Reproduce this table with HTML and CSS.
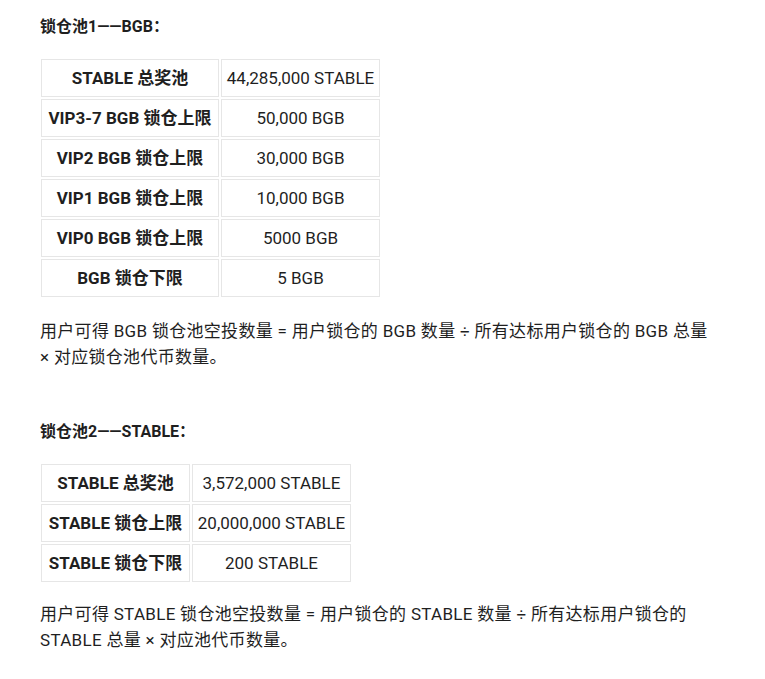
FILE: index.html
```html
<!DOCTYPE html>
<html lang="zh-CN">
<head>
<meta charset="utf-8">
<link rel="stylesheet" href="styles.css">
</head>
<body>
<div class="article">
  <p class="heading">锁仓池1——BGB：</p>
  <table class="pool pool-bgb">
    <tr><th>STABLE 总奖池</th><td>44,285,000 STABLE</td></tr>
    <tr><th>VIP3-7 BGB 锁仓上限</th><td>50,000 BGB</td></tr>
    <tr><th>VIP2 BGB 锁仓上限</th><td>30,000 BGB</td></tr>
    <tr><th>VIP1 BGB 锁仓上限</th><td>10,000 BGB</td></tr>
    <tr><th>VIP0 BGB 锁仓上限</th><td>5000 BGB</td></tr>
    <tr><th>BGB 锁仓下限</th><td>5 BGB</td></tr>
  </table>
  <p class="text">用户可得 BGB 锁仓池空投数量 = 用户锁仓的 BGB 数量 ÷ 所有达标用户锁仓的 BGB 总量 × 对应锁仓池代币数量。</p>
  <p class="heading heading-second">锁仓池2——STABLE：</p>
  <table class="pool pool-stable">
    <tr><th>STABLE 总奖池</th><td>3,572,000 STABLE</td></tr>
    <tr><th>STABLE 锁仓上限</th><td>20,000,000 STABLE</td></tr>
    <tr><th>STABLE 锁仓下限</th><td>200 STABLE</td></tr>
  </table>
  <p class="text text-last">用户可得 STABLE 锁仓池空投数量 = 用户锁仓的 STABLE 数量 ÷ 所有达标用户锁仓的 STABLE 总量 × 对应池代币数量。</p>
</div>
</body>
</html>
```
FILE: styles.css
```css
html, body {
  margin: 0;
  padding: 0;
  background: #ffffff;
}

body {
  font-family: Roboto, "Noto Sans CJK SC", sans-serif;
  font-size: 17px;
  line-height: 26px;
  color: #1f1f1f;
}

.article {
  padding: 14px 40px 0 40px;
  width: 680px;
}

.heading {
  margin: 0;
  font-size: 16px;
  font-weight: 700;
}

.heading-second {
  margin-top: 49px;
}

.pool {
  border-collapse: separate;
  border-spacing: 2px;
  margin: 17px 0 0 -1px;
}

.pool th,
.pool td {
  border: 1px solid #e6e6e6;
  padding: 5px 4px;
  text-align: center;
  white-space: nowrap;
  font-size: 17px;
  line-height: 26px;
}

.pool th {
  font-weight: 700;
}

.pool td {
  font-weight: 400;
}

.pool-bgb th { width: 168px; }
.pool-bgb td { width: 149px; }

.pool-stable th { width: 139px; }
.pool-stable td { width: 149px; }

.text {
  margin: 19px 0 0 0;
  font-size: 17px;
  letter-spacing: 0.3px;
}

.text-last {
  margin-top: 17px;
}
```
